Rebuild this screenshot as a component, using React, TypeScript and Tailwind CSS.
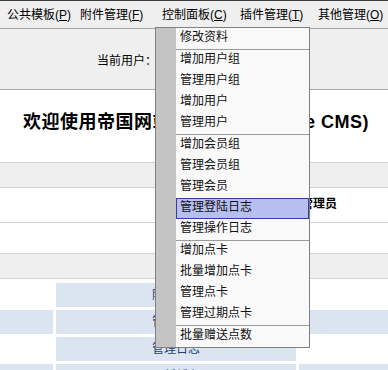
// EmpireCMS admin header with the "控制面板" dropdown open.
const FONT = { fontFamily: '"Liberation Sans", "Noto Sans CJK SC", sans-serif' }

type MenuEntry = { label: string; separatorAfter?: boolean; active?: boolean }

const topMenus: { label: string; key: string; width: string }[] = [
  { label: '公共模板', key: 'P', width: 'w-[73px]' },
  { label: '附件管理', key: 'F', width: 'w-[82px]' },
  { label: '控制面板', key: 'C', width: 'w-[78px]' },
  { label: '插件管理', key: 'T', width: 'w-[78px]' },
  { label: '其他管理', key: 'O', width: 'w-[70px]' },
]

const panelItems: MenuEntry[] = [
  { label: '修改资料', separatorAfter: true },
  { label: '增加用户组' },
  { label: '管理用户组' },
  { label: '增加用户' },
  { label: '管理用户', separatorAfter: true },
  { label: '增加会员组' },
  { label: '管理会员组' },
  { label: '管理会员' },
  { label: '管理登陆日志', active: true },
  { label: '管理操作日志', separatorAfter: true },
  { label: '增加点卡' },
  { label: '批量增加点卡' },
  { label: '管理点卡' },
  { label: '管理过期点卡', separatorAfter: true },
  { label: '批量赠送点数' },
]

const quickRows = ['附件管理', '管理附件', '管理日志', '更新缓存']

function DropdownMenu() {
  return (
    <div className="absolute left-[155px] top-[27px] flex w-[155px] border border-[#7f7f7f] bg-[#f9f9f9]">
      <div className="w-[20px] shrink-0 bg-[#c4c4c4]" />
      <div className="flex flex-1 flex-col">
        {panelItems.map((item) => (
          <div key={item.label}>
            <div
              className={
                item.active
                  ? 'flex h-[21px] items-center border border-[#3b3b9c] bg-[#b7bef0] pb-[3px] pl-[3px] text-[12px] text-[#111]'
                  : 'flex h-[21px] items-center pb-[3px] pl-[4px] text-[12px] text-[#111]'
              }
            >
              {item.label}
            </div>
            {item.separatorAfter && <div className="h-px bg-[#9a9a9a]" />}
          </div>
        ))}
      </div>
    </div>
  )
}

function Band() {
  return <div className="h-[26px] border-y border-[#d2d2d2] bg-[#efefef]" />
}

export default function App() {
  return (
    <div className="relative h-[370px] w-[388px] overflow-hidden bg-white text-black" style={FONT}>
      <div className="flex h-[29px] items-center border-y border-t-[#3a3a3a] border-b-[#a3a3a3] bg-[#efefef] pl-[7px] text-[12px]">
        {topMenus.map((m) => (
          <div key={m.key} className={`${m.width} shrink-0 whitespace-nowrap`}>
            {m.label}(<u>{m.key}</u>)
          </div>
        ))}
      </div>

      <div className="flex h-[61px] items-center border-b border-[#a3a3a3] bg-[#efefef] pl-[97px] pt-[3px] text-[12px]">
        当前用户：<b>admin</b>
      </div>

      <div className="flex h-[72px] items-center justify-center pb-[8px] pl-[4px] text-[18px] font-bold tracking-[0.5px]">
        欢迎使用帝国网站管理系统(Empire CMS)
      </div>

      <Band />

      <div className="flex h-[35px] items-center justify-end border-b border-[#d2d2d2] pb-[2px] pr-[51px] text-[12px] font-bold">
        用户组：超级管理员
      </div>

      <div className="h-[30px]" />

      <Band />

      <div className="mt-[4px] grid grid-cols-[53px_240px_1fr] gap-[3px]">
        {quickRows.map((label, i) => (
          <div key={label} className="contents">
            <div className={i % 2 === 1 ? 'h-[24px] bg-[#dbe5f1]' : 'h-[24px] bg-white'} />
            <div className="flex h-[24px] items-center justify-center bg-[#dbe5f1] text-[12px] text-[#23416f]">
              {label}
            </div>
            <div className={i % 2 === 1 ? 'h-[24px] bg-[#dbe5f1]' : 'h-[24px] bg-white'} />
          </div>
        ))}
      </div>

      <DropdownMenu />
    </div>
  )
}
